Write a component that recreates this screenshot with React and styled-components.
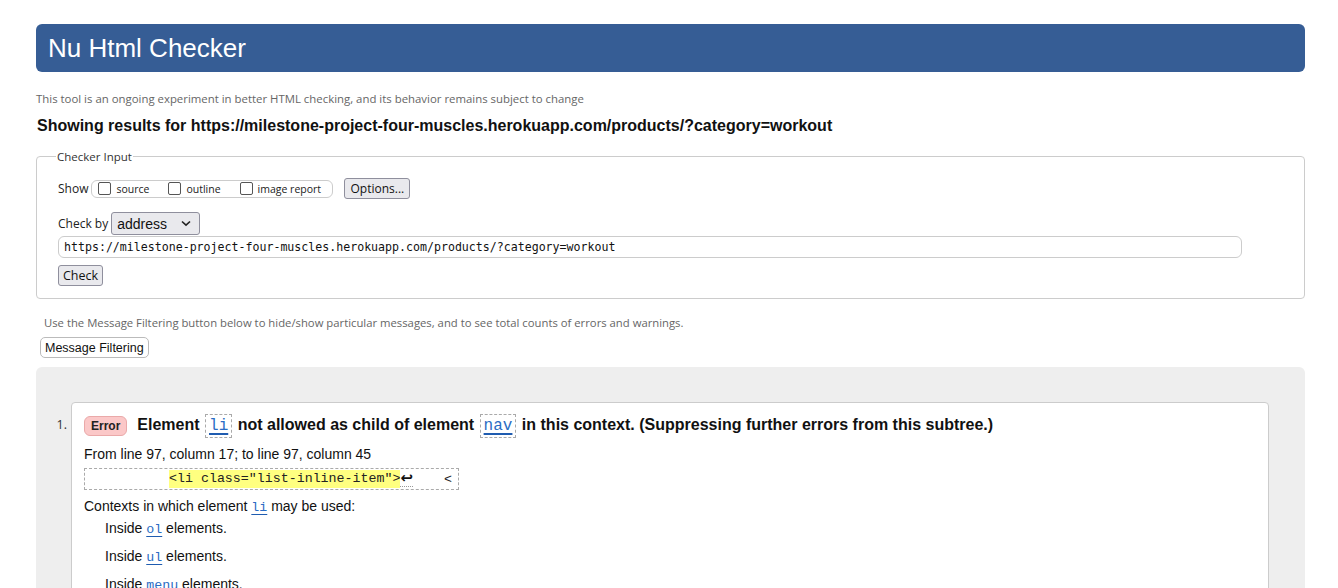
import React from "react";
import styled, { createGlobalStyle } from "styled-components";

const GlobalStyle = createGlobalStyle`
  html, body {
    margin: 0;
    padding: 0;
    background: #fff;
    overflow: hidden;
  }
  body {
    font-family: "Liberation Sans", Arial, sans-serif;
    color: #111;
  }
`;

const URL = "https://milestone-project-four-muscles.herokuapp.com/products/?category=workout";

export default function App() {
  return (
    <>
      <GlobalStyle />
      <Page>
        <Header>Nu Html Checker</Header>
        <Intro>This tool is an ongoing experiment in better HTML checking, and its behavior remains subject to change</Intro>
        <ResultsFor>Showing results for {URL}</ResultsFor>

        <Fieldset>
          <Legend>Checker Input</Legend>
          <Row>
            <Label>Show</Label>
            <CheckGroup>
              <CheckItem><Box />source</CheckItem>
              <CheckItem><Box />outline</CheckItem>
              <CheckItem><Box />image report</CheckItem>
            </CheckGroup>
            <Button $ml={11}>Options...</Button>
          </Row>
          <Row $mt={13}>
            <Label>Check by</Label>
            <Select>
              address
              <svg width="10" height="7" viewBox="0 0 10 7">
                <path d="M1 1.5 L5 5.2 L9 1.5" fill="none" stroke="#222" strokeWidth="1.6" />
              </svg>
            </Select>
          </Row>
          <UrlField>{URL}</UrlField>
          <Button $big>Check</Button>
        </Fieldset>

        <FilterNote>Use the Message Filtering button below to hide/show particular messages, and to see total counts of errors and warnings.</FilterNote>
        <FilterButton>Message Filtering</FilterButton>

        <Results>
          <Item>
            <Num>1.</Num>
            <Card>
              <Title>
                <Badge>Error</Badge>
                <span>
                  Element <Code>li</Code> not allowed as child of element <Code>nav</Code> in this context. (Suppressing further errors from this subtree.)
                </span>
              </Title>
              <Location>From line 97, column 17; to line 97, column 45</Location>
              <Extract>
                <Mark>{'<li class="list-inline-item">'}</Mark>
                <Lf>↩</Lf>
                <Tail>{"<"}</Tail>
              </Extract>
              <Para>
                Contexts in which element <Ref>li</Ref> may be used:
              </Para>
              <Ctx>Inside <Ref>ol</Ref> elements.</Ctx>
              <Ctx>Inside <Ref>ul</Ref> elements.</Ctx>
              <Ctx>Inside <Ref>menu</Ref> elements.</Ctx>
            </Card>
          </Item>
        </Results>
      </Page>
    </>
  );
}

const Page = styled.div`
  padding: 24px 33px 0 36px;
`;

const Header = styled.h1`
  margin: 0;
  height: 48px;
  display: flex;
  align-items: center;
  padding-left: 12px;
  background: #365d95;
  border-radius: 6px;
  color: #fff;
  font-family: "Liberation Sans", Arial, sans-serif;
  font-weight: normal;
  font-size: 26px;
`;

const Intro = styled.p`
  margin: 19px 0 0;
  font-family: "Open Sans", sans-serif;
  font-size: 11.4px;
  line-height: 15px;
  color: #666;
`;

const ResultsFor = styled.h2`
  margin: 10px 0 0 1px;
  font-size: 16px;
  line-height: 20px;
  font-weight: bold;
  color: #111;
`;

const Fieldset = styled.fieldset`
  margin: 13px 0 0;
  padding: 14px 62px 12px 21px;
  border: 1px solid #ccc;
  border-radius: 4px;
  height: 150px;
  box-sizing: border-box;
  min-width: 0;
`;

const Legend = styled.legend`
  padding: 0 1px;
  margin-left: -2px;
  font-family: "Open Sans", sans-serif;
  font-size: 11.5px;
  color: #333;
`;

const Row = styled.div`
  display: flex;
  align-items: center;
  margin-top: ${(p) => p.$mt || 0}px;
`;

const Label = styled.span`
  font-family: "Open Sans", sans-serif;
  font-size: 12px;
  color: #222;
  margin-right: 3px;
`;

const CheckGroup = styled.div`
  display: flex;
  align-items: center;
  gap: 19px;
  height: 18px;
  padding: 0 4px 0 6px;
  border: 1px solid #ccc;
  border-radius: 6px;
  box-sizing: border-box;
  width: 242px;
`;

const CheckItem = styled.label`
  display: flex;
  align-items: center;
  font-family: "Open Sans", sans-serif;
  font-size: 10.5px;
  color: #222;
`;

const Box = styled.span`
  width: 11px;
  height: 11px;
  border: 1px solid #555;
  border-radius: 2px;
  margin-right: 5px;
`;

const Button = styled.button`
  margin-left: ${(p) => p.$ml || 0}px;
  height: 21px;
  padding: 0 ${(p) => (p.$big ? 4 : 5)}px;
  background: #e9e9ed;
  border: 1px solid #8f8f9d;
  border-radius: 3px;
  font-family: "Open Sans", sans-serif;
  font-size: ${(p) => (p.$big ? 12.5 : 12)}px;
  color: #111;
  display: block;
`;

const Select = styled.div`
  display: flex;
  align-items: center;
  justify-content: space-between;
  width: 89px;
  height: 23px;
  box-sizing: border-box;
  padding: 0 8px 0 5px;
  background: #e9e9ed;
  border: 1px solid #8f8f9d;
  border-radius: 3px;
  font-family: "Liberation Sans", Arial, sans-serif;
  font-size: 14px;
  color: #111;
`;

const UrlField = styled.div`
  margin: 1px 0 7px;
  height: 22px;
  box-sizing: border-box;
  display: flex;
  align-items: center;
  padding-left: 5px;
  border: 1px solid #ccc;
  border-radius: 6px;
  font-family: "DejaVu Sans Mono", monospace;
  font-size: 11.6px;
  color: #111;
`;

const FilterNote = styled.p`
  margin: 16px 0 0 8px;
  font-family: "Open Sans", sans-serif;
  font-size: 11.3px;
  line-height: 15px;
  color: #666;
`;

const FilterButton = styled.button`
  margin: 7px 0 0 4px;
  height: 21px;
  padding: 0 4px;
  background: #fff;
  border: 1px solid #bbb;
  border-radius: 5px;
  font-family: "Liberation Sans", Arial, sans-serif;
  font-size: 12.5px;
  color: #111;
  display: block;
`;

const Results = styled.div`
  margin-top: 9px;
  background: #eee;
  border-radius: 6px 6px 0 0;
  padding: 35px 36px 0 0;
  height: 300px;
`;

const Item = styled.div`
  display: flex;
  align-items: flex-start;
`;

const Num = styled.div`
  width: 35px;
  padding-top: 13px;
  box-sizing: border-box;
  text-align: right;
  padding-right: 4px;
  font-family: "Open Sans", sans-serif;
  font-size: 12.5px;
  color: #333;
  line-height: 20px;
  flex-shrink: 0;
`;

const Card = styled.div`
  flex: 1;
  background: #fff;
  border: 1px solid #ccc;
  border-radius: 4px 4px 0 0;
  padding: 10px 12px 40px 12px;
`;

const Title = styled.div`
  display: flex;
  align-items: center;
  font-size: 16px;
  font-weight: bold;
  line-height: 24px;
`;

const Badge = styled.span`
  display: inline-flex;
  align-items: center;
  height: 20px;
  box-sizing: border-box;
  padding: 0 6px;
  margin-right: 10px;
  background: #fbc8c8;
  border: 1px solid #eaa9a9;
  border-radius: 6px;
  font-size: 12px;
  font-weight: bold;
  color: #222;
`;

const Code = styled.span`
  display: inline-block;
  border: 1px dashed #aaa;
  padding: 0 3px;
  margin: 0 1px;
  line-height: 22px;
  font-family: "Liberation Mono", "Courier New", monospace;
  font-weight: normal;
  font-size: 16px;
  color: #2a6cc4;
  text-decoration: underline;
  text-decoration-color: #1f5cb0;
  text-decoration-thickness: 2px;
  text-underline-offset: 3px;
`;

const Location = styled.p`
  margin: 7px 0 0;
  font-size: 14px;
  line-height: 18px;
`;

const Extract = styled.div`
  margin-top: 5px;
  width: 375px;
  height: 22px;
  box-sizing: border-box;
  border: 1px dashed #aaa;
  display: flex;
  align-items: center;
  padding-left: 84px;
  font-family: "Liberation Mono", "Courier New", monospace;
  font-size: 13.3px;
  color: #222;
`;

const Mark = styled.span`
  background: #ffff80;
  line-height: 18px;
`;

const Lf = styled.span`
  font-family: "DejaVu Sans", sans-serif;
  font-size: 15px;
  font-weight: bold;
  color: #111;
  border-bottom: 1px dotted #999;
  line-height: 15px;
  margin-right: 31px;
`;

const Tail = styled.span``;

const Para = styled.p`
  margin: 7px 0 0;
  font-size: 14px;
  line-height: 18px;
`;

const Ctx = styled.p`
  margin: 3px 0 0 21px;
  font-size: 14px;
  line-height: 20px;
  & + & {
    margin-top: 8px;
  }
`;

const Ref = styled.span`
  font-family: "Liberation Mono", "Courier New", monospace;
  font-size: 13.3px;
  line-height: 1;
  color: #2a6cc4;
  text-decoration: underline;
  text-decoration-color: #1f5cb0;
  text-underline-offset: 3px;
`;
